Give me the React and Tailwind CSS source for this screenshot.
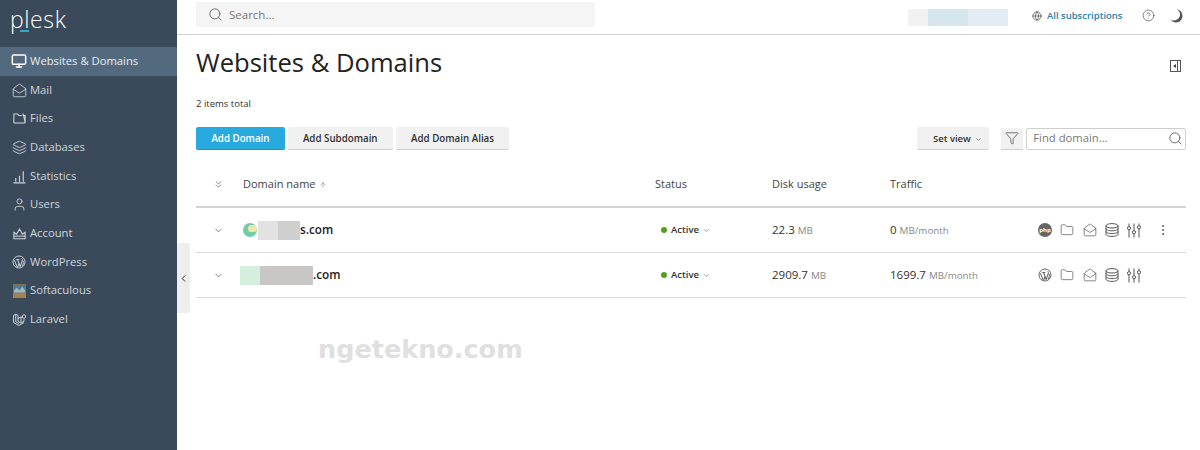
import React from "react";
import {
  Monitor, MailOpen, Layers, User, Search, Globe, CircleHelp, Filter,
  ChevronDown, ChevronsDown, ChevronLeft, Folder, MoreVertical, ArrowUp,
} from "lucide-react";

const WpIcon = ({ size = 16, color = "currentColor" }) => (
  <svg width={size} height={size} viewBox="0 0 20 20" fill="none" stroke={color} className="shrink-0">
    <circle cx="10" cy="10" r="8.6" strokeWidth="1.3" />
    <path d="M3.4 7.5 7.6 17.6M6 6.6h4.4M8 6.6l3.6 10 3-8.4c.5-1.4.2-2.6-.8-3.4M10.2 12l-2.2 5.4M15.8 8.400c1 2.600.4 5.600-1.800 7.600" strokeWidth="1.4" />
  </svg>
);

const FilesIcon = ({ size = 16 }) => (
  <svg width={size} height={size} viewBox="0 0 20 20" fill="none" stroke="currentColor" strokeWidth="1.4" className="shrink-0">
    <path d="M2.500 16V4h5l1.500 2h4M15 3.500V6h2.500v10z" />
    <path d="M2.500 16h15" />
  </svg>
);

const StatsIcon = ({ size = 16 }) => (
  <svg width={size} height={size} viewBox="0 0 20 20" fill="none" stroke="currentColor" strokeWidth="1.500" className="shrink-0">
    <path d="M5 17v-5M10 17V9M15 17V3M2 18.500h16" />
  </svg>
);

const CrownIcon = ({ size = 16 }) => (
  <svg width={size} height={size} viewBox="0 0 20 20" fill="none" stroke="currentColor" strokeWidth="1.4" className="shrink-0">
    <path d="M2.500 8.500V17h15V8.500l-3.500 2.500L10 4 6 11z" />
    <path d="M2.500 13.500h15" />
  </svg>
);

const SoftIcon = () => (
  <svg width="13" height="14" viewBox="0 0 14 15" className="shrink-0">
    <rect width="14" height="15" fill="#8a7350" />
    <rect width="14" height="6" y="1" fill="#4f7c92" />
    <path d="M1 7l3-3 3 3 3-4 3 4v2H1z" fill="#9bb9c4" />
    <rect y="10" width="14" height="5" fill="#a38555" />
  </svg>
);

const LaravelIcon = ({ size = 16 }) => (
  <svg width={size} height={size} viewBox="0 0 20 20" fill="none" stroke="currentColor" strokeWidth="1.3" className="shrink-0">
    <path d="M2 4.500 5 3l3 1.500v8l4 2.200 4-2.200V9.500M2 4.500v9.500l7 4 7-4M5 3v10l4 2.500M8 8.500l4-2 4 2 2-1V4.500l-2-1-2 1V7M12 6.500v8" />
  </svg>
);

const DbIcon = () => (
  <svg width="14" height="14" viewBox="0 0 14 14" fill="none" stroke="currentColor" strokeWidth="1" className="shrink-0">
    <ellipse cx="7" cy="2.800" rx="6" ry="2.200" />
    <path d="M1 2.800v8.400c0 1.200 2.700 2.200 6 2.200s6-1 6-2.200V2.800M1 5.600c0 1.200 2.700 2.200 6 2.200s6-1 6-2.200M1 8.400c0 1.200 2.700 2.200 6 2.200s6-1 6-2.200" />
  </svg>
);

const TuneIcon = () => (
  <svg width="14" height="15" viewBox="0 0 14 15" fill="none" stroke="currentColor" strokeWidth="1" className="shrink-0">
    <path d="M2 .500v3M2 7v7.500M7 .500v7M7 11v3.500M12 .500v2M12 6v8.500" />
    <circle cx="2" cy="5.200" r="1.600" />
    <circle cx="7" cy="9.200" r="1.600" />
    <circle cx="12" cy="4.200" r="1.600" />
  </svg>
);

const MoonIcon = () => (
  <svg width="13" height="14" viewBox="0 0 13 14" fill="#555" className="shrink-0">
    <path d="M7 .500c3.400.7 5.500 3.300 5.500 6.400 0 3.600-2.900 6.500-6.500 6.500-2.400 0-4.500-1.300-5.500-3.200 1 .8 2.200 1.200 3.500 1.200 3.400 0 6-2.600 6-5.800 0-1.900-1-3.600-2.500-4.600z" />
  </svg>
);

const NAV = [
  { label: "Websites & Domains", icon: <Monitor size={16} strokeWidth={2.2} className="shrink-0 text-white" />, active: true },
  { label: "Mail", icon: <MailOpen size={15} strokeWidth={1.4} className="shrink-0" /> },
  { label: "Files", icon: <FilesIcon size={15} /> },
  { label: "Databases", icon: <Layers size={15} strokeWidth={1.4} className="shrink-0" /> },
  { label: "Statistics", icon: <StatsIcon size={15} /> },
  { label: "Users", icon: <User size={15} strokeWidth={1.4} className="shrink-0" /> },
  { label: "Account", icon: <CrownIcon size={15} /> },
  { label: "WordPress", icon: <WpIcon size={14} /> },
  { label: "Softaculous", icon: <SoftIcon /> },
  { label: "Laravel", icon: <LaravelIcon size={15} /> },
];

const Btn = ({ children, primary, className = "" }) => (
  <button
    className={`h-[23px] pt-[2px] rounded-[2px] text-[9.750px] font-semibold border-b ${
      primary ? "bg-[#28aade] border-[#1f93c2] text-white" : "bg-[#f1f1f1] border-[#cfcfcf] text-[#333]"
    } ${className}`}
  >
    {children}
  </button>
);

const RowIcons = ({ first }) => (
  <div className="flex items-center gap-[8.300px] text-[#555]">
    {first ? (
      <span className="w-[14px] h-[14px] rounded-full bg-[#666] text-white text-[6px] font-bold flex items-center justify-center">php</span>
    ) : (
      <WpIcon size={14} />
    )}
    <Folder size={14} strokeWidth={1.2} />
    <MailOpen size={14} strokeWidth={1.2} />
    <DbIcon />
    <TuneIcon />
    {first && <MoreVertical size={14} strokeWidth={1.6} className="ml-[7px]" />}
  </div>
);

const Row = ({ name, disk, traffic, first }) => (
  <div className="h-[45px] flex items-center border-b border-[#dcdcdc]">
    <div className="w-[47px] pl-[17px] text-[#555]">
      <ChevronDown size={11} strokeWidth={1.6} />
    </div>
    <div className="w-[412px] flex items-center text-[11.750px] font-semibold text-[#222]">{name}</div>
    <div className="w-[117px] flex items-center pl-[6px]">
      <span className="w-[6px] h-[6px] rounded-full bg-[#53a01f] mr-[4px]" />
      <span className="text-[9.500px] font-semibold text-[#333]">Active</span>
      <ChevronDown size={7} strokeWidth={1.8} className="ml-[4px] text-[#444]" />
    </div>
    <div className="w-[118px] text-[11.500px] text-[#333]">
      {disk} <span className="text-[9.800px] text-[#888]">MB</span>
    </div>
    <div className="w-[148px] text-[11.500px] text-[#333]">
      {traffic} <span className="text-[9.800px] text-[#888]">MB/month</span>
    </div>
    <RowIcons first={first} />
  </div>
);

export default function App() {
  return (
    <div className="relative w-[1200px] h-[450px] flex overflow-hidden bg-white font-['Open_Sans',sans-serif]">
      <aside className="w-[177px] shrink-0 bg-[#3b4a5a] text-[#cfd6dc]">
        <div className="h-[47px] pl-[10px] pt-[2px]">
          <div className="relative w-fit text-[23px] leading-[34px] font-light text-white tracking-[0.6px]">
            plesk
            <span className="absolute left-[10px] top-[28px] w-[9px] h-[1.500px] bg-[#33a9c9]" />
          </div>
        </div>
        {NAV.map((n) => (
          <div
            key={n.label}
            className={`h-[28.700px] pl-[11px] flex items-center gap-[3px] text-[11.250px] ${
              n.active ? "bg-[#536a7e] text-[#e8edf0]" : ""
            }`}
          >
            <span className="w-[16px] flex justify-center">{n.icon}</span>
            <span>{n.label}</span>
          </div>
        ))}
      </aside>

      <main className="flex-1 min-w-0">
        <header className="h-[35px] border-b border-[#cfcfcf] flex items-start pl-[19px] pt-[2px] whitespace-nowrap">
          <div className="w-[399px] shrink-0 h-[25px] rounded-[2px] bg-[#f5f5f5] flex items-center pl-[12px] gap-[6px] text-[11.500px] text-[#777]">
            <Search size={15} strokeWidth={1.3} className="text-[#555]" />
            Search...
          </div>
          <div className="ml-[313px] mt-[7px] flex h-[17px] w-[100px] shrink-0">
            <span className="w-[20px] bg-[#f2f2f2]" />
            <span className="w-[40px] bg-[#d6e6ef]" />
            <span className="w-[40px] bg-[#e2edf3]" />
          </div>
          <div className="ml-[24px] mt-[5px] flex items-center gap-[5px] text-[9.500px] font-semibold text-[#2a7f9e] leading-[18px]">
            <Globe size={10} strokeWidth={1.6} className="text-[#444]" />
            All subscriptions
          </div>
          <CircleHelp size={13} strokeWidth={1.2} className="ml-[19px] mt-[7px] text-[#444] shrink-0" />
          <span className="ml-[15px] mt-[7px]"><MoonIcon /></span>
        </header>

        <div className="pl-[19px] pr-[14px]">
          <div className="flex items-center justify-between h-[56px]">
            <h1 className="text-[25.600px] font-normal text-[#222] leading-none">Websites &amp; Domains</h1>
            <span className="w-[11px] h-[12px] mt-[5px] border border-[#555] flex mr-[5px]">
              <span className="w-[7px] border-r border-[#555] flex items-center justify-center">
                <span className="border-y-[2.500px] border-r-[3px] border-y-transparent border-r-[#444]" />
              </span>
            </span>
          </div>
          <div className="mt-[6px] text-[9.500px] leading-[13px] text-[#333]">2 items total</div>

          <div className="mt-[17px] flex items-center h-[23px]">
            <Btn primary className="w-[89px]">Add Domain</Btn>
            <Btn className="w-[105px] ml-[3px]">Add Subdomain</Btn>
            <Btn className="w-[114px] ml-[3px]">Add Domain Alias</Btn>
            <Btn className="w-[72px] ml-[408px] pl-[8px] flex items-center justify-center gap-[4px]">
              <span className="text-[9.500px]">Set view</span> <ChevronDown size={7} strokeWidth={1.8} />
            </Btn>
            <div className="ml-[12px] w-[22px] h-[22px] bg-[#f1f1f1] border-b border-[#cfcfcf] flex items-center justify-center text-[#444]">
              <Filter size={14} strokeWidth={1.2} />
            </div>
            <div className="ml-[3px] w-[160px] h-[22px] border border-[#cfcfcf] rounded-[2px] flex items-center justify-between pl-[6px] pr-[2px] text-[11.250px] text-[#777]">
              Find domain...
              <Search size={15} strokeWidth={1.2} className="text-[#444]" />
            </div>
          </div>

          <div className="mt-[13px] h-[45px] flex items-center border-b-2 border-[#d4d4d4] text-[11px] text-[#444]">
            <div className="w-[47px] pl-[17px] text-[#555]">
              <ChevronsDown size={11} strokeWidth={1.5} />
            </div>
            <div className="w-[412px] flex items-center">
              Domain name <ArrowUp size={8} strokeWidth={1.5} className="ml-[3px] text-[#666]" />
            </div>
            <div className="w-[117px]">Status</div>
            <div className="w-[118px]">Disk usage</div>
            <div>Traffic</div>
          </div>

          <Row
            first
            disk="22.3"
            traffic="0"
            name={
              <>
                <span className="w-[14px] h-[14px] rounded-full bg-[#74cba8] mr-[1px] flex items-start justify-end">
                  <span className="w-[9px] h-[7px] mt-[2px] rounded-full bg-[#f1e7ae]" />
                </span>
                <span className="w-[20px] h-[19px] bg-[#e2e2e2]" />
                <span className="w-[22px] h-[19px] bg-[#cfcfcf]" />
                <span>s.com</span>
              </>
            }
          />
          <Row
            disk="2909.7"
            traffic="1699.7"
            name={
              <>
                <span className="-ml-[3px] w-[20px] h-[19px] bg-[#d5efdf]" />
                <span className="w-[53px] h-[19px] bg-[#c9c6c6]" />
                <span>.com</span>
              </>
            }
          />
        </div>
      </main>

      <div className="absolute left-[177px] top-[243px] w-[13px] h-[70px] bg-[#eeeeee] rounded-r-[2px] flex items-center justify-center text-[#222]">
        <ChevronLeft size={11} strokeWidth={2} />
      </div>
      <div className="absolute left-[318px] top-[331px] text-[25.500px] leading-[36px] font-bold text-[#e0e0e0] font-['DejaVu_Sans',sans-serif]">
        ngetekno.com
      </div>
    </div>
  );
}
